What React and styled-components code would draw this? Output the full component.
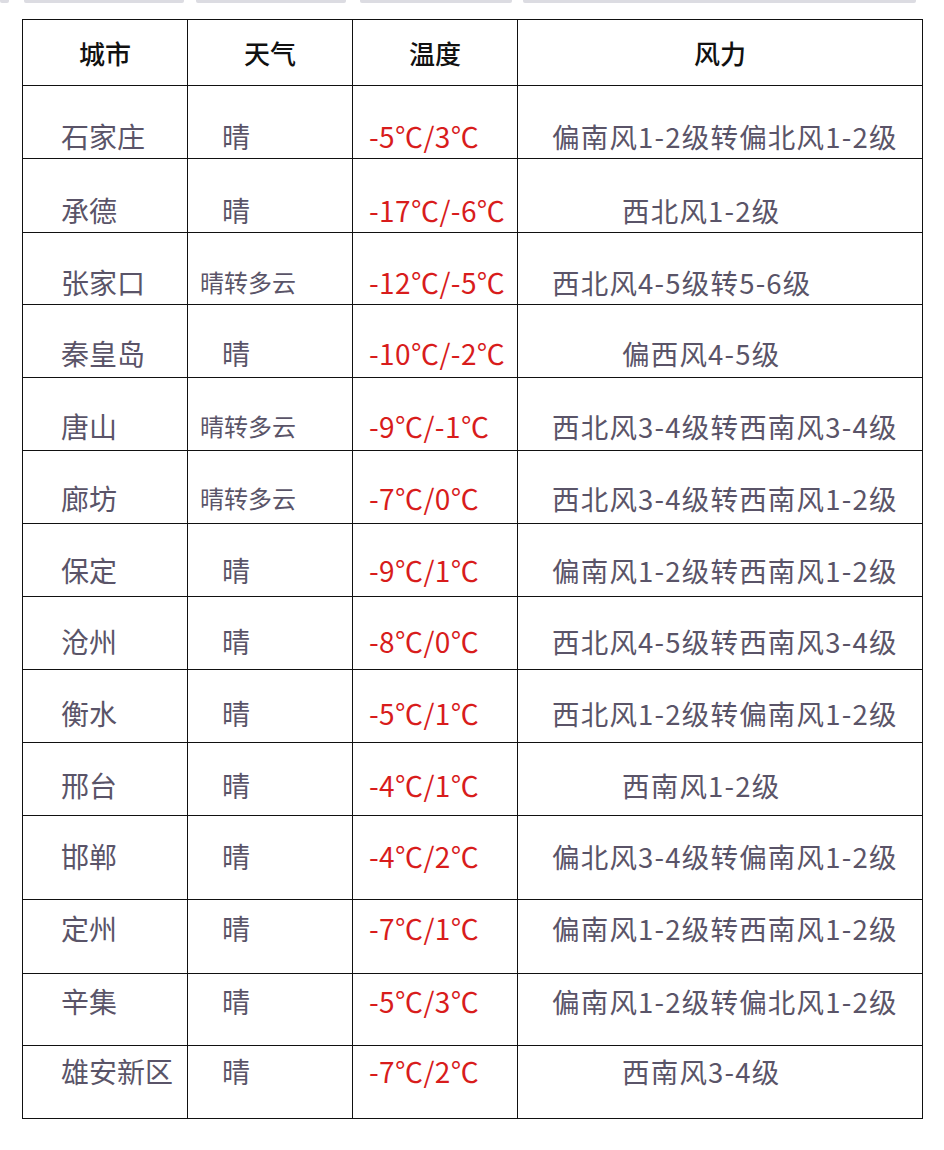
import React from "react";
import styled, { createGlobalStyle } from "styled-components";

const GlobalStyle = createGlobalStyle`
  html, body {
    margin: 0;
    padding: 0;
    background: #ffffff;
  }
  body {
    font-family: "Noto Sans CJK SC", "Noto Sans", sans-serif;
  }
`;

const Page = styled.div`
  width: 944px;
  min-height: 1150px;
  background: #ffffff;
`;

// remnant of the previous table, cut off by the top edge of the shot
const PrevStrip = styled.div`
  display: flex;
  height: 3px;
`;

const PrevSeg = styled.div`
  height: 3px;
  margin-left: ${(p) => p.gap}px;
  width: ${(p) => p.w}px;
  background: #dcdce2;
  border-radius: 0 0 2px 2px;
`;

const Table = styled.table`
  margin: 16px 0 0 22px;
  width: 900px;
  table-layout: fixed;
  border-collapse: collapse;
  border: 1.5px solid #111;
`;

const HeadRow = styled.tr`
  height: 66px;
`;

const HeadCell = styled.th`
  border: 1.5px solid #111;
  padding: 0;
  font-size: 26px;
  font-weight: 500;
  color: #111;
  text-align: center;
  vertical-align: middle;
  line-height: 28px;
`;

const Row = styled.tr`
  height: ${(p) => p.h}px;
`;

const Cell = styled.td`
  border: 1.5px solid #111;
  vertical-align: top;
  padding: ${(p) => p.top}px 0 0 0;
  line-height: 28px;
  white-space: nowrap;
  overflow: hidden;
`;

const CityCell = styled(Cell)`
  padding-left: 38px;
  font-size: 28px;
  color: #5a5468;
`;

const WeatherCell = styled(Cell)`
  padding-left: ${(p) => (p.small ? 12 : 34)}px;
  font-size: ${(p) => (p.small ? 24 : 28)}px;
  color: #5a5468;
`;

const TempCell = styled(Cell)`
  padding-left: 16px;
  font-size: 28px;
  letter-spacing: 0.4px;
  color: #d81c1c;
`;

const WindCell = styled(Cell)`
  padding-left: ${(p) => (p.short ? 104 : 34)}px;
  font-size: 27.5px;
  letter-spacing: 1.2px;
  color: #5a5468;
`;

const rows = [
  { city: "石家庄", weather: "晴", temp: "-5℃/3℃", wind: "偏南风1-2级转偏北风1-2级", h: 73, top: 36 },
  { city: "承德", weather: "晴", temp: "-17℃/-6℃", wind: "西北风1-2级", h: 74, top: 37 },
  { city: "张家口", weather: "晴转多云", temp: "-12℃/-5℃", wind: "西北风4-5级转5-6级", h: 72, top: 35 },
  { city: "秦皇岛", weather: "晴", temp: "-10℃/-2℃", wind: "偏西风4-5级", h: 73, top: 34 },
  { city: "唐山", weather: "晴转多云", temp: "-9℃/-1℃", wind: "西北风3-4级转西南风3-4级", h: 73, top: 34 },
  { city: "廊坊", weather: "晴转多云", temp: "-7℃/0℃", wind: "西北风3-4级转西南风1-2级", h: 73, top: 33 },
  { city: "保定", weather: "晴", temp: "-9℃/1℃", wind: "偏南风1-2级转西南风1-2级", h: 73, top: 32 },
  { city: "沧州", weather: "晴", temp: "-8℃/0℃", wind: "西北风4-5级转西南风3-4级", h: 73, top: 30 },
  { city: "衡水", weather: "晴", temp: "-5℃/1℃", wind: "西北风1-2级转偏南风1-2级", h: 73, top: 29 },
  { city: "邢台", weather: "晴", temp: "-4℃/1℃", wind: "西南风1-2级", h: 73, top: 28 },
  { city: "邯郸", weather: "晴", temp: "-4℃/2℃", wind: "偏北风3-4级转偏南风1-2级", h: 84, top: 26 },
  { city: "定州", weather: "晴", temp: "-7℃/1℃", wind: "偏南风1-2级转西南风1-2级", h: 74, top: 14 },
  { city: "辛集", weather: "晴", temp: "-5℃/3℃", wind: "偏南风1-2级转偏北风1-2级", h: 72, top: 13 },
  { city: "雄安新区", weather: "晴", temp: "-7℃/2℃", wind: "西南风3-4级", h: 73, top: 11 },
];

const prevSegs = [
  { gap: 0, w: 9 },
  { gap: 15, w: 160 },
  { gap: 12, w: 150 },
  { gap: 14, w: 152 },
  { gap: 11, w: 393 },
];

export default function App() {
  return (
    <Page>
      <GlobalStyle />
      <PrevStrip>
        {prevSegs.map((s, i) => (
          <PrevSeg key={i} gap={s.gap} w={s.w} />
        ))}
      </PrevStrip>

      <Table>
        <colgroup>
          <col style={{ width: 165 }} />
          <col style={{ width: 165 }} />
          <col style={{ width: 165 }} />
          <col style={{ width: 405 }} />
        </colgroup>
        <thead>
          <HeadRow>
            <HeadCell>城市</HeadCell>
            <HeadCell>天气</HeadCell>
            <HeadCell>温度</HeadCell>
            <HeadCell>风力</HeadCell>
          </HeadRow>
        </thead>
        <tbody>
          {rows.map((r) => (
            <Row key={r.city} h={r.h}>
              <CityCell top={r.top}>{r.city}</CityCell>
              <WeatherCell top={r.top} small={r.weather.length > 1}>
                {r.weather}
              </WeatherCell>
              <TempCell top={r.top}>{r.temp}</TempCell>
              <WindCell top={r.top} short={!r.wind.includes("转")}>
                {r.wind}
              </WindCell>
            </Row>
          ))}
        </tbody>
      </Table>
    </Page>
  );
}
